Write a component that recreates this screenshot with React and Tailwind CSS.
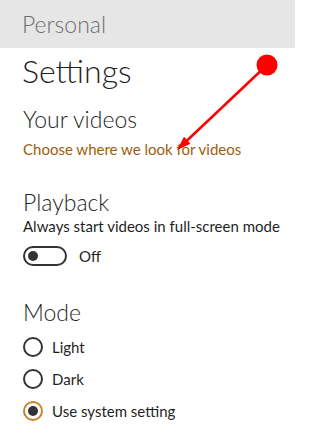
import { useState } from "react";

const font = { fontFamily: 'Lato, "Liberation Sans", sans-serif' };

function Radio({ label, checked, onSelect }) {
  return (
    <button
      type="button"
      onClick={onSelect}
      className="flex items-center h-[20px] text-left"
    >
      <span
        className={
          checked
            ? "flex items-center justify-center w-[20px] h-[20px] rounded-full border-2 border-[#c8822a]"
            : "flex items-center justify-center w-[20px] h-[20px] rounded-full border-2 border-[#333333]"
        }
      >
        {checked && <span className="w-[10px] h-[10px] rounded-full bg-[#333333]" />}
      </span>
      <span className="ml-[9px] text-[15px] leading-[20px] text-[#1f1f1f]">{label}</span>
    </button>
  );
}

export default function App() {
  const [fullScreen, setFullScreen] = useState(false);
  const [mode, setMode] = useState("system");

  return (
    <div className="relative w-[295px] h-[433px] overflow-hidden bg-white" style={font}>
      <header className="h-[48px] bg-[#e6e6e6] pl-[22px]">
        <h1 className="text-[23px] leading-[48px] font-light text-[#6e6e6e]">Personal</h1>
      </header>

      <main className="px-[23px]">
        <h2 className="mt-[5px] text-[32px] leading-[36px] font-light text-[#1f1f1f] -ml-[1px]">
          Settings
        </h2>

        <section className="mt-[16px]">
          <h3 className="text-[23px] leading-[28px] font-light text-[#1f1f1f]">Your videos</h3>
          <a href="#" className="block mt-[6px] text-[15px] leading-[20px] text-[#9c5d0b]">
            Choose where we look for videos
          </a>
        </section>

        <section className="mt-[29px]">
          <h3 className="text-[23px] leading-[28px] font-light text-[#1f1f1f]">Playback</h3>
          <p className="text-[15px] leading-[20px] text-[#1f1f1f] whitespace-nowrap">
            Always start videos in full-screen mode
          </p>
          <div className="mt-[10px] flex items-center h-[20px]">
            <button
              type="button"
              onClick={() => setFullScreen(!fullScreen)}
              className="flex items-center w-[44px] h-[20px] rounded-full border-2 border-[#333333] px-[3px]"
            >
              <span className="w-[10px] h-[10px] rounded-full bg-[#333333]" />
            </button>
            <span className="ml-[12px] text-[15px] leading-[20px] text-[#1f1f1f]">
              {fullScreen ? "On" : "Off"}
            </span>
          </div>
        </section>

        <section className="mt-[32px]">
          <h3 className="text-[23px] leading-[28px] font-light text-[#1f1f1f]">Mode</h3>
          <div className="mt-[11px] flex flex-col gap-[12px]">
            <Radio label="Light" checked={mode === "light"} onSelect={() => setMode("light")} />
            <Radio label="Dark" checked={mode === "dark"} onSelect={() => setMode("dark")} />
            <Radio
              label="Use system setting"
              checked={mode === "system"}
              onSelect={() => setMode("system")}
            />
          </div>
        </section>
      </main>

      {/* annotation arrow */}
      <svg className="absolute left-0 top-0 pointer-events-none" width="295" height="433">
        <line x1="267" y1="65" x2="186" y2="141.5" stroke="#ff0000" strokeWidth="2.5" />
        <polygon points="177,150 190.5,143.8 184,136.8" fill="#ff0000" />
        <circle cx="267" cy="65" r="10.5" fill="#ff0000" />
      </svg>
    </div>
  );
}
